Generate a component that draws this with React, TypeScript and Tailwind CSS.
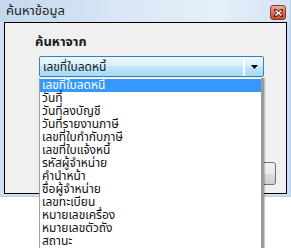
import React from "react";

const items = [
  "เลขที่ใบลดหนี้",
  "วันที่",
  "วันที่ลงบัญชี",
  "วันที่รายงานภาษี",
  "เลขที่ใบกำกับภาษี",
  "เลขที่ใบแจ้งหนี้",
  "รหัสผู้จำหน่าย",
  "คำนำหน้า",
  "ชื่อผู้จำหน่าย",
  "เลขทะเบียน",
  "หมายเลขเครื่อง",
  "หมายเลขตัวถัง",
  "สถานะ",
];

const font = { fontFamily: 'Tahoma, "Noto Sans Thai", "Noto Sans", "DejaVu Sans", sans-serif' };

export default function App() {
  return (
    <div className="relative w-[291px] h-[248px] bg-white overflow-hidden" style={font}>
      {/* window */}
      <div className="w-[291px] h-[197px] bg-[#cddff2] flex flex-col border-r border-b border-[#b9cfe8]">
        {/* title bar */}
        <div className="h-[22px] flex items-center justify-between pl-[6px] pr-[4px] bg-[linear-gradient(to_right,#c3d8ee,#dde9f7_50%,#e6eff9_75%,#d3e3f4)]">
          <span className="text-[13px] leading-none text-[#1e1e1e]">ค้นหาข้อมูล</span>
          <div className="w-[16px] h-[15px] mt-[3px] rounded-[3px] border border-[#8a3a2c] bg-[linear-gradient(to_bottom,#f0b09a,#de6c50_50%,#c94a30)] flex items-center justify-center">
            <svg width="9" height="8" viewBox="0 0 9 8">
              <path d="M1 1 L8 7 M8 1 L1 7" stroke="#5a1e14" strokeWidth="3" strokeLinecap="square" />
              <path d="M1.5 1.5 L7.5 6.5 M7.5 1.5 L1.5 6.5" stroke="#ffffff" strokeWidth="1.6" />
            </svg>
          </div>
        </div>
        {/* client panel */}
        <div className="ml-[4px] w-[283px] h-[172px] border border-black bg-[#f0f0f0] flex flex-col">
          <div className="pl-[30px] pt-[12px] text-[13px] font-bold leading-[15px] text-[#1a1a1a]">ค้นหาจาก</div>
          {/* combo box */}
          <div className="ml-[34px] mt-[6px] w-[225px] h-[21px] rounded-[2px] border border-[#3c7fb1] bg-[linear-gradient(to_bottom,#eaf6fd,#d9f0fc_45%,#bee6fd_50%,#a7d9f5)] flex items-stretch">
            <div className="flex-1 flex items-center pl-[3px] text-[12px] text-[#1a1a1a]">เลขที่ใบลดหนี้</div>
            <div className="w-[2px] bg-white" />
            <div className="w-[18px] flex items-center justify-center">
              <svg width="7" height="4" viewBox="0 0 7 4">
                <path d="M0 0 H7 L3.5 4 Z" fill="#000" />
              </svg>
            </div>
          </div>
          <div className="flex-1" />
          <div className="flex justify-end pr-[10px] pb-[8px]">
            <div className="w-[75px] h-[23px] rounded-[3px] border border-[#707070] bg-[linear-gradient(to_bottom,#f2f2f2,#ebebeb_50%,#dddddd_51%,#cfcfcf)]" />
          </div>
        </div>
      </div>
      {/* dropdown list */}
      <div className="absolute left-[39px] top-[78px] w-[225px] bg-white border-l border-[#a0a0a0] border-r-[3px] border-r-[#9a9a9a] shadow-[1px_0_1px_rgba(0,0,0,0.2)] pt-[1px]">
        {items.map((t, i) => (
          <div
            key={t}
            className={
              "h-[13px] pl-[2px] text-[12px] leading-[13px] whitespace-nowrap " +
              (i === 0 ? "bg-[#3399ff] text-white" : "text-[#111]")
            }
          >
            {t}
          </div>
        ))}
      </div>
    </div>
  );
}
